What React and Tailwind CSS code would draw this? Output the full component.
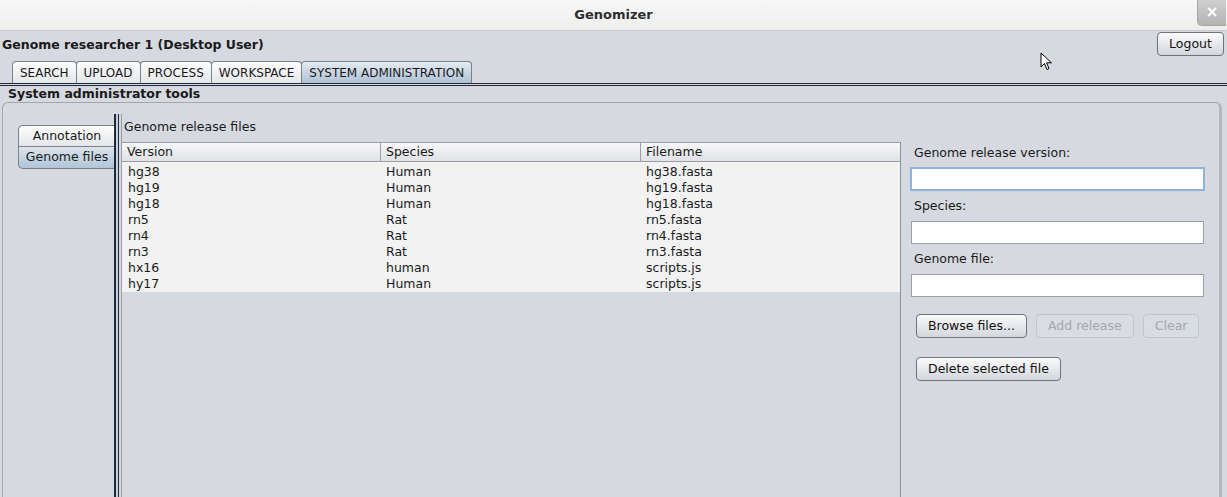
import React from "react";

const rows = [
  ["hg38", "Human", "hg38.fasta"],
  ["hg19", "Human", "hg19.fasta"],
  ["hg18", "Human", "hg18.fasta"],
  ["rn5", "Rat", "rn5.fasta"],
  ["rn4", "Rat", "rn4.fasta"],
  ["rn3", "Rat", "rn3.fasta"],
  ["hx16", "human", "scripts.js"],
  ["hy17", "Human", "scripts.js"],
];

const tabs = ["SEARCH", "UPLOAD", "PROCESS", "WORKSPACE", "SYSTEM ADMINISTRATION"];

function Btn({ children, disabled, className = "" }) {
  return (
    <button
      className={
        "h-[24px] px-[11px] rounded-[4px] border text-[12.5px] leading-none whitespace-nowrap " +
        (disabled
          ? "border-[#c3c6cc] text-[#a4a7ad] bg-[#d9dce1]"
          : "border-[#6f7379] text-[#111] bg-gradient-to-b from-[#fbfbfc] to-[#d3d6db]") +
        " " +
        className
      }
    >
      {children}
    </button>
  );
}

export default function App() {
  return (
    <div
      className="relative w-[1227px] h-[497px] overflow-hidden bg-[#d6d9df] text-[#1a1a1a] text-[12.5px]"
      style={{ fontFamily: '"DejaVu Sans", sans-serif' }}
    >
      {/* title bar */}
      <div className="relative h-[31px] bg-gradient-to-b from-[#f7f7f7] to-[#eeeeee] border-b border-[#c8cacd] flex items-center justify-center">
        <span className="text-[13px] font-bold text-[#2e2e2e]">Genomizer</span>
        <div className="absolute right-[1px] top-0 w-[29px] h-[26px] rounded-bl-[5px] bg-gradient-to-b from-[#cfcfcf] to-[#b3b3b3] border-l border-b border-[#a5a5a5] flex items-center justify-center text-white text-[15px] font-bold">
          ×
        </div>
      </div>

      {/* user row */}
      <div className="flex items-start justify-between pl-[2px] pr-[3px] h-[30px]">
        <span className="mt-[5px] font-bold">Genome researcher 1 (Desktop User)</span>
        <Btn className="mt-[1px] w-[67px] h-[24px] px-0">Logout</Btn>
      </div>

      {/* tabs */}
      <div className="flex pl-[12px] h-[22px] items-end">
        {tabs.map((t, i) => (
          <div
            key={t}
            className={
              "h-[22px] px-[7px] flex items-center text-[12px] border border-b-0 border-[#7a7f88] rounded-t-[4px] -mr-px " +
              (i === 4
                ? "bg-gradient-to-b from-[#e4ebf2] to-[#aec1d4]"
                : "bg-gradient-to-b from-[#fdfdfd] to-[#e4e6ea]")
            }
          >
            {t}
          </div>
        ))}
      </div>
      <div className="h-[3px] border-t border-[#1e2a3c] border-b border-b-[#1e2a3c]" />

      <div className="pl-[8px] h-[16px] font-bold leading-[16px]">
        System administrator tools
      </div>

      {/* main panel */}
      <div className="ml-[2px] mr-[5px] h-[401px] rounded-[6px] border border-[#a3a6ab] border-r-[3px] border-r-[#b4b7bc] flex">
        {/* side tabs */}
        <div className="w-[111px] pt-[22px] pl-[15px] flex flex-col">
          <div className="w-[97px] h-[22px] rounded-tl-[5px] border border-r-0 border-[#7a7f88] bg-gradient-to-b from-[#fdfdfd] to-[#e4e6ea] flex items-center justify-center">
            Annotation
          </div>
          <div className="w-[97px] h-[22px] rounded-bl-[5px] border border-r-0 border-t-0 border-[#7a7f88] bg-gradient-to-b from-[#dce4ec] to-[#b1c4d7] flex items-center justify-center">
            Genome files
          </div>
        </div>
        {/* double line */}
        <div className="w-[2px] bg-[#1e2a3c] mt-[11px]" />
        <div className="w-[2px] bg-[#c4d0dc] mt-[11px]" />
        <div className="w-[1px] bg-[#1e2a3c] mt-[11px]" />
        <div className="w-[2px]" />
        <div className="w-[1px] bg-[#9a9da3] mt-[11px]" />

        {/* table area */}
        <div className="w-[779px] flex flex-col">
          <div className="h-[39px] pl-[2px] pt-[16px] leading-[15px]">Genome release files</div>
          <div className="flex-1 border-r border-[#8e9197] flex flex-col">
            <div className="flex h-[20px] border-t border-b border-[#9a9da3] bg-gradient-to-b from-[#f8f8f9] to-[#dfe1e5]">
              <div className="w-[259px] border-r border-[#9a9da3] pl-[5px] flex items-center">Version</div>
              <div className="w-[260px] border-r border-[#9a9da3] pl-[5px] flex items-center">Species</div>
              <div className="flex-1 pl-[5px] flex items-center">Filename</div>
            </div>
            <div className="bg-[#f2f2f2] pt-[2px]">
              {rows.map((r) => (
                <div key={r[0]} className="flex h-[16px] leading-[16px]">
                  <div className="w-[259px] pl-[6px]">{r[0]}</div>
                  <div className="w-[260px] pl-[5px]">{r[1]}</div>
                  <div className="flex-1 pl-[5px]">{r[2]}</div>
                </div>
              ))}
            </div>
          </div>
        </div>

        {/* form */}
        <div className="flex-1 pl-[9px] pr-[14px] pt-[42px] flex flex-col">
          <div className="pl-[4px] h-[16px] leading-[16px]">Genome release version:</div>
          <div className="mt-[6px] h-[24px] bg-white border-2 border-[#8fb2d6]" />
          <div className="mt-[7px] pl-[4px] h-[16px] leading-[16px]">Species:</div>
          <div className="mt-[7px] mx-px h-[23px] bg-white border border-[#9c9fa5]" />
          <div className="mt-[7px] pl-[4px] h-[16px] leading-[16px]">Genome file:</div>
          <div className="mt-[7px] mx-px h-[23px] bg-white border border-[#9c9fa5]" />
          <div className="mt-[17px] pl-[6px] flex gap-[9px]">
            <Btn>Browse files...</Btn>
            <Btn disabled>Add release</Btn>
            <Btn disabled>Clear</Btn>
          </div>
          <div className="mt-[19px] pl-[6px] flex">
            <Btn>Delete selected file</Btn>
          </div>
        </div>
      </div>

      {/* mouse cursor */}
      <svg className="absolute left-[1040px] top-[52px]" width="14" height="20" viewBox="0 0 14 20">
        <path d="M1 1 L1 15 L4.5 11.5 L7 17.5 L9 16.5 L6.6 10.8 L11.5 10.8 Z" fill="#fff" stroke="#000" strokeWidth="1" />
      </svg>
    </div>
  );
}
